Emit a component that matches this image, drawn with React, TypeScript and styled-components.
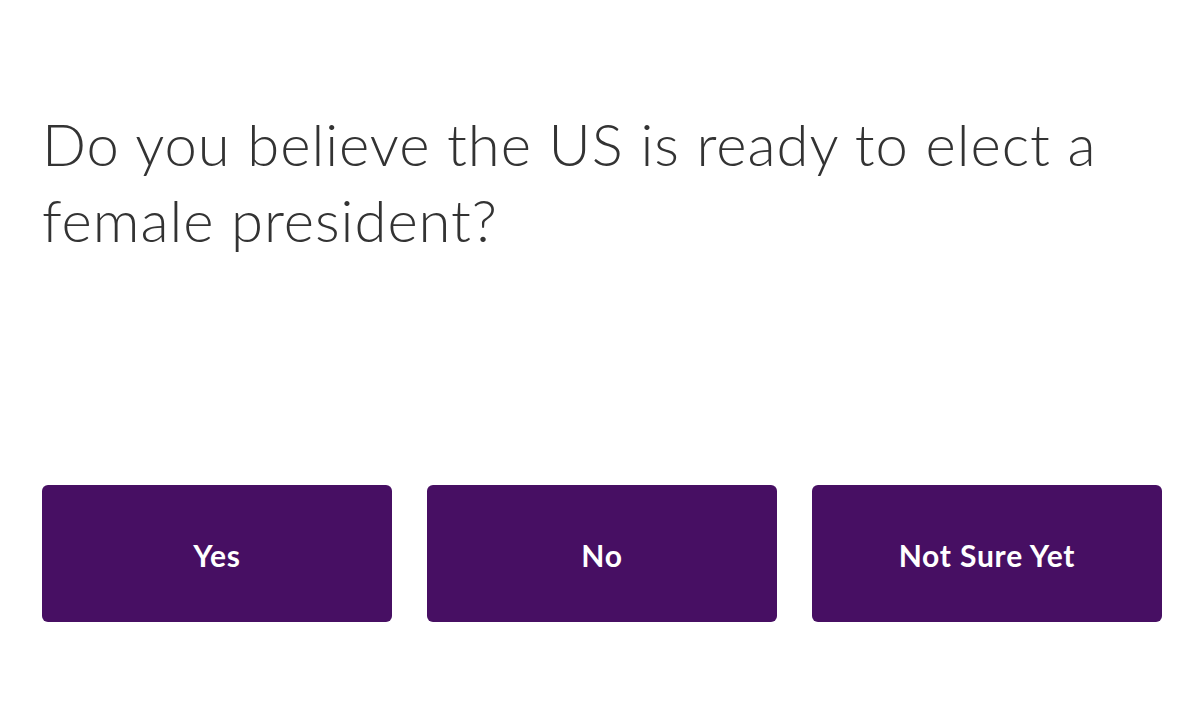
import React from "react";
import styled, { createGlobalStyle } from "styled-components";

const Global = createGlobalStyle`
  html, body { margin: 0; padding: 0; background: #ffffff; }
  body { font-family: Lato, "Noto Sans", sans-serif; }
`;

const Page = styled.main`
  width: 1200px;
  height: 708px;
  box-sizing: border-box;
  padding: 106px 38px 0 42px;
  display: flex;
  flex-direction: column;
`;

const Question = styled.h1`
  margin: 0;
  font-family: Lato, sans-serif;
  font-weight: 300;
  font-size: 58px;
  line-height: 76px;
  color: #333333;
  letter-spacing: 0.95px;
`;

const Options = styled.div`
  margin-top: 227px;
  display: grid;
  grid-template-columns: repeat(3, 350px);
  column-gap: 35px;
`;

const Option = styled.button`
  height: 137px;
  border: none;
  border-radius: 6px;
  background: #470f63;
  color: #ffffff;
  font-family: Lato, sans-serif;
  font-weight: 700;
  font-size: 30px;
  letter-spacing: 0.8px;
  padding: 2px 0 0;
  cursor: pointer;
  display: flex;
  align-items: center;
  justify-content: center;
`;

export default function App() {
  return (
    <>
      <Global />
      <Page>
        <Question>
          Do you believe the US is ready to elect a<br />female president?
        </Question>
        <Options>
          <Option>Yes</Option>
          <Option>No</Option>
          <Option>Not Sure Yet</Option>
        </Options>
      </Page>
    </>
  );
}
